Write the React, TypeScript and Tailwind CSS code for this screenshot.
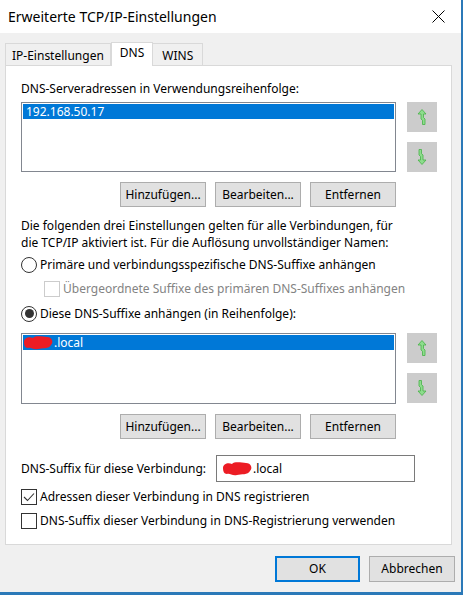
import React from "react";

// green "move up/down" arrow, drawn as in the Windows dialog
function MoveArrow({ down }: { down?: boolean }) {
  return (
    <svg width="12" height="18" viewBox="0 0 12 18" className={down ? "rotate-180" : ""}>
      <path
        d="M6 1.5 L10 6 L7.5 6 L7.5 9.5 L9 11 L9 16.5 L6.5 16.5 L6.5 12.3 L5 11 L5 6 L2 6 Z"
        fill="#8ddc8d"
        stroke="#46b346"
        strokeWidth="0.8"
        strokeLinejoin="round"
      />
    </svg>
  );
}

function Blot() {
  return (
    <svg width="31" height="15" viewBox="0 0 31 15" className="shrink-0">
      <path
        d="M1 7 C1 3 6 1 10 3 C13 0 20 2 24 2 C29 2 31 7 28 10 C26 14 19 13 15 14 C10 15 8 12 5 13 C2 13 1 10 1 7 Z"
        fill="#ec1c24"
      />
    </svg>
  );
}

function Btn({ children }: { children: React.ReactNode }) {
  return (
    <div className="flex h-[25px] w-[86px] items-center justify-center border border-[#adadad] bg-[#e1e1e1] text-[12px] text-black">
      {children}
    </div>
  );
}

function Radio({ checked }: { checked?: boolean }) {
  return (
    <div className="flex h-[16px] w-[16px] shrink-0 items-center justify-center rounded-full border border-[#333333] bg-white">
      {checked && <div className="h-[9px] w-[9px] rounded-full bg-[#333333]" />}
    </div>
  );
}

function Check({ checked, disabled }: { checked?: boolean; disabled?: boolean }) {
  return (
    <div
      className={
        "flex h-[16px] w-[16px] shrink-0 items-center justify-center border bg-white " +
        (disabled ? "border-[#cccccc]" : "border-[#333333]")
      }
    >
      {checked && (
        <svg width="14" height="14" viewBox="0 0 14 14">
          <path d="M2 7 L5.5 10.5 L12 3.5" fill="none" stroke="#333333" strokeWidth="1.1" />
        </svg>
      )}
    </div>
  );
}

function ListWithArrows({ height, children }: { height: string; children: React.ReactNode }) {
  return (
    <div className="flex gap-[11px]">
      <div className={"w-[375px] border border-[#828790] bg-white p-px " + height}>{children}</div>
      <div className="flex flex-col gap-[10px]">
        <div className="flex h-[30px] w-[30px] items-center justify-center bg-[#cccccc]">
          <MoveArrow />
        </div>
        <div className="flex h-[30px] w-[30px] items-center justify-center bg-[#cccccc]">
          <MoveArrow down />
        </div>
      </div>
    </div>
  );
}

function ButtonRow() {
  return (
    <div className="mt-[10px] flex w-[375px] justify-end gap-[9px]">
      <Btn>Hinzufügen...</Btn>
      <Btn>Bearbeiten...</Btn>
      <Btn>Entfernen</Btn>
    </div>
  );
}

export default function App() {
  return (
    <div
      className="flex h-[595px] w-[463px] flex-col border-r-2 border-b-[3px] border-[#2b79b8] bg-[#f0f0f0] text-[12px] text-black"
      style={{ fontFamily: '"Noto Sans", "Open Sans", sans-serif' }}
    >
      {/* title bar */}
      <div className="flex h-[33px] shrink-0 items-center justify-between bg-white pl-[8px] pr-[16px]">
        <span className="text-[14px] text-black">Erweiterte TCP/IP-Einstellungen</span>
        <svg width="13" height="13" viewBox="0 0 13 13">
          <path d="M0.5 0.5 L12.5 12.5 M12.5 0.5 L0.5 12.5" stroke="#000" strokeWidth="1" />
        </svg>
      </div>

      {/* tabs */}
      <div className="mt-[9px] flex items-end pl-[5px]">
        <div className="flex h-[22px] items-center border border-b-0 border-[#d9d9d9] bg-[#f0f0f0] px-[6px] pt-[2px]">
          IP-Einstellungen
        </div>
        <div className="relative z-10 -mb-px flex h-[24px] items-center border border-b-0 border-[#d9d9d9] bg-white px-[8px] pb-[3px]">
          DNS
        </div>
        <div className="flex h-[22px] items-center border border-b-0 border-l-0 border-[#d9d9d9] bg-[#f0f0f0] px-[9px] pt-[2px]">
          WINS
        </div>
      </div>

      {/* tab panel */}
      <div className="mx-[5px] flex w-[447px] flex-col border border-[#d9d9d9] bg-white pb-[15px] pl-[15px]">
        <div className="mt-[15px] flex h-[16px] items-center whitespace-nowrap">
          DNS-Serveradressen in Verwendungsreihenfolge:
        </div>
        <div className="mt-[5px]">
          <ListWithArrows height="h-[70px]">
            <div className="flex h-[15px] items-center bg-[#0078d7] pl-[3px] text-white">192.168.50.17</div>
          </ListWithArrows>
        </div>
        <ButtonRow />

        <div className="mt-[10px] whitespace-nowrap leading-[17px]">
          Die folgenden drei Einstellungen gelten für alle Verbindungen, für
          <br />
          die TCP/IP aktiviert ist. Für die Auflösung unvollständiger Namen:
        </div>
        <div className="mt-[5px] flex h-[17px] items-center gap-[3px] whitespace-nowrap">
          <Radio />
          <span>Primäre und verbindungsspezifische DNS-Suffixe anhängen</span>
        </div>
        <div className="mt-[7px] flex h-[17px] items-center gap-[3px] whitespace-nowrap pl-[23px] text-[#838383]">
          <Check disabled />
          <span>Übergeordnete Suffixe des primären DNS-Suffixes anhängen</span>
        </div>
        <div className="mt-[8px] flex h-[17px] items-center gap-[3px] whitespace-nowrap">
          <Radio checked />
          <span>Diese DNS-Suffixe anhängen (in Reihenfolge):</span>
        </div>
        <div className="mt-[11px]">
          <ListWithArrows height="h-[71px]">
            <div className="flex h-[15px] items-center bg-[#0078d7] text-white">
              <Blot />
              <span>.local</span>
            </div>
          </ListWithArrows>
        </div>
        <ButtonRow />

        <div className="mt-[16px] flex h-[27px] items-center gap-[10px] whitespace-nowrap">
          <span className="w-[185px]">DNS-Suffix für diese Verbindung:</span>
          <div className="flex h-[27px] w-[199px] items-center border border-[#7a7a7a] bg-white pl-[5px]">
            <Blot />
            <span>.local</span>
          </div>
        </div>
        <div className="mt-[6px] flex h-[17px] items-center gap-[3px] whitespace-nowrap">
          <Check checked />
          <span>Adressen dieser Verbindung in DNS registrieren</span>
        </div>
        <div className="mt-[7px] flex h-[17px] items-center gap-[3px] whitespace-nowrap">
          <Check />
          <span>DNS-Suffix dieser Verbindung in DNS-Registrierung verwenden</span>
        </div>
      </div>

      {/* footer */}
      <div className="mt-[11px] flex justify-end gap-[9px] pr-[6px]">
        <div className="flex h-[26px] w-[85px] items-center justify-center border-2 border-[#0078d7] bg-[#e1e1e1]">OK</div>
        <div className="flex h-[26px] w-[86px] items-center justify-center border border-[#adadad] bg-[#e1e1e1]">
          Abbrechen
        </div>
      </div>
    </div>
  );
}
